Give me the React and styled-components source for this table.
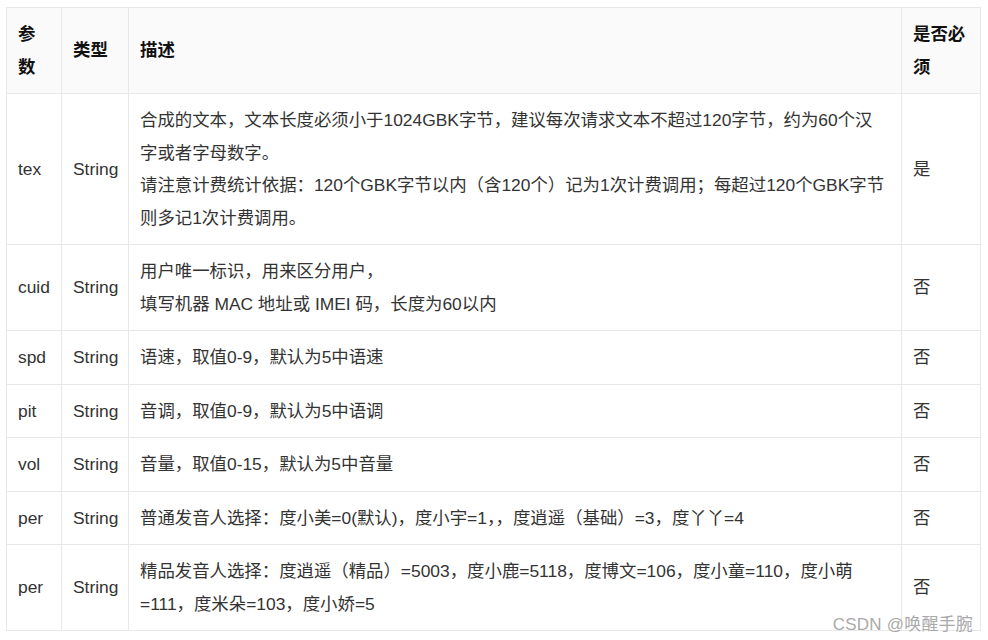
import React from 'react'
import styled, { createGlobalStyle } from 'styled-components'

const rows = [
  {
    name: 'tex',
    lines: [
      '合成的文本，文本长度必须小于1024GBK字节，建议每次请求文本不超过120字节，约为60个汉字或者字母数字。',
      '请注意计费统计依据：120个GBK字节以内（含120个）记为1次计费调用；每超过120个GBK字节则多记1次计费调用。',
    ],
    required: '是',
  },
  { name: 'cuid', lines: ['用户唯一标识，用来区分用户，', '填写机器 MAC 地址或 IMEI 码，长度为60以内'], required: '否' },
  { name: 'spd', lines: ['语速，取值0-9，默认为5中语速'], required: '否' },
  { name: 'pit', lines: ['音调，取值0-9，默认为5中语调'], required: '否' },
  { name: 'vol', lines: ['音量，取值0-15，默认为5中音量'], required: '否' },
  { name: 'per', lines: ['普通发音人选择：度小美=0(默认)，度小宇=1，，度逍遥（基础）=3，度丫丫=4'], required: '否' },
  {
    name: 'per',
    lines: ['精品发音人选择：度逍遥（精品）=5003，度小鹿=5118，度博文=106，度小童=110，度小萌=111，度米朵=103，度小娇=5'],
    required: '否',
  },
]

const App = () => {
  return (
    <Page>
      <GlobalStyle />
      <Table>
        <colgroup>
          <col style={{ width: 55 }} />
          <col style={{ width: 67 }} />
          <col style={{ width: 773 }} />
          <col style={{ width: 79 }} />
        </colgroup>
        <thead>
          <tr>
            <Th>参数</Th>
            <Th>类型</Th>
            <Th>描述</Th>
            <Th>是否必须</Th>
          </tr>
        </thead>
        <tbody>
          {rows.map((row, i) => (
            <tr key={i}>
              <Td>{row.name}</Td>
              <Td>String</Td>
              <Desc>
                {row.lines.map((line, j) => (
                  <Line key={j}>{line}</Line>
                ))}
              </Desc>
              <Td>{row.required}</Td>
            </tr>
          ))}
        </tbody>
      </Table>
      <Watermark>CSDN @唤醒手腕</Watermark>
    </Page>
  )
}

//styles

const GlobalStyle = createGlobalStyle`
  body {
    margin: 0;
    background: #ffffff;
    font-family: "Liberation Sans", "Noto Sans CJK SC", sans-serif;
  }
`

const Page = styled.div`
  position: relative;
  width: 988px;
  height: 640px;
  padding: 7px 0 0 6px;
  box-sizing: border-box;
`

const Table = styled.table`
  width: 975px;
  table-layout: fixed;
  border-collapse: collapse;
  font-size: 17.4px;
  line-height: 32.5px;
  color: #333333;
`

const Th = styled.th`
  padding: 10px 10px 10px 11px;
  border: 1px solid #e8e8e8;
  background: #fafafa;
  text-align: left;
  vertical-align: middle;
  font-weight: bold;
  color: #111111;
`

const Td = styled.td`
  padding: 10px 10px 10px 11px;
  border: 1px solid #e8e8e8;
  vertical-align: middle;
`

const Desc = styled(Td)`
  padding-right: 14px;
`

const Line = styled.div``

const Watermark = styled.div`
  position: absolute;
  right: 15px;
  top: 610px;
  font-size: 17px;
  color: #a9a9a9;
  letter-spacing: 0.2px;
`

export default App
